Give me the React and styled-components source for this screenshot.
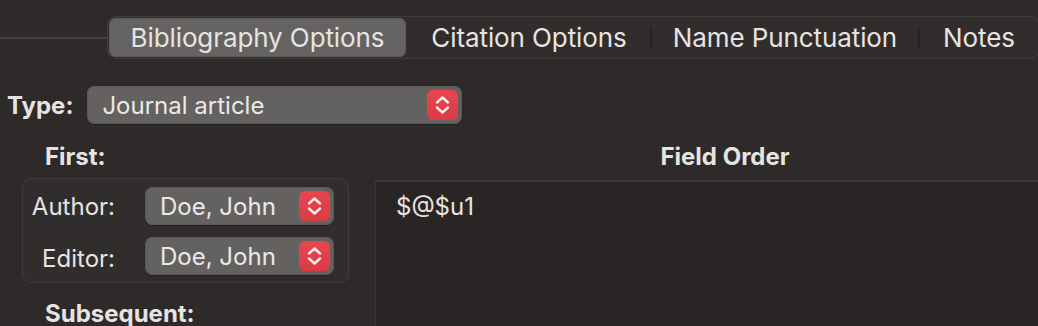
import React from 'react'
import styled, { createGlobalStyle } from 'styled-components'

const GlobalStyle = createGlobalStyle`
  html, body {
    margin: 0;
    padding: 0;
    background: #2d2a29;
  }
  body {
    font-family: Inter, "Noto Sans", "Liberation Sans", sans-serif;
    color: #e3e1df;
  }
`

const Window = styled.div`
  width: 1038px;
  height: 326px;
  overflow: hidden;
  background: #2d2a29;
`

const TabHeader = styled.div`
  display: flex;
  align-items: center;
  padding-top: 16px;
`

const TabRule = styled.div`
  flex: 0 0 107px;
  height: 2px;
  background: #444140;
`

const TabBar = styled.div`
  display: flex;
  align-items: center;
  height: 41px;
  padding: 0 1px;
  border: 1px solid #403d3c;
  border-radius: 9px;
  background: #302d2c;
`

const Tab = styled.div`
  width: ${(p) => p.$w}px;
  height: 39px;
  display: flex;
  align-items: center;
  justify-content: center;
  font-size: 26px;
  letter-spacing: -0.1px;
  color: #e6e4e2;
  border-radius: 7px;
  background: ${(p) => (p.$active ? '#656361' : 'transparent')};
  box-shadow: ${(p) => (p.$active ? 'inset 0 0 0 1px #5d5b59' : 'none')};
`

const TabDivider = styled.div`
  width: 2px;
  height: 22px;
  background: ${(p) => (p.$hidden ? 'transparent' : '#262322')};
`

const TypeRow = styled.div`
  display: flex;
  align-items: center;
  gap: 14px;
  padding-left: 7px;
  margin-top: 27px;
`

const BoldLabel = styled.div`
  font-size: 24px;
  font-weight: 700;
  color: #e6e4e2;
  line-height: 29px;
`

const Popup = styled.div`
  width: ${(p) => p.$w}px;
  height: 38px;
  box-sizing: border-box;
  display: flex;
  align-items: center;
  justify-content: space-between;
  padding: 0 4px 0 15px;
  border-radius: 8px;
  background: #646261;
  box-shadow: inset 0 0 0 1px #5a5856, 0 1px 1px rgba(0, 0, 0, 0.25);
  font-size: 24px;
  color: #ebe9e7;
`

const Stepper = styled.div`
  width: 31px;
  height: 30px;
  border-radius: 6px;
  background: linear-gradient(#e8454f, #dc3a45);
  display: flex;
  align-items: center;
  justify-content: center;
`

const Columns = styled.div`
  display: flex;
  align-items: flex-start;
  margin-top: 18px;
`

const LeftColumn = styled.div`
  flex: 0 0 325px;
  margin-left: 22px;
`

const SectionTitle = styled(BoldLabel)`
  padding-left: ${(p) => p.$indent || 0}px;
  text-align: ${(p) => p.$align || 'left'};
`

const GroupBox = styled.div`
  margin-top: 7px;
  box-sizing: border-box;
  height: 105px;
  padding: 8px 14px 0 0;
  border: 1px solid #403d3c;
  border-radius: 9px;
  background: #302d2c;
  display: flex;
  flex-direction: column;
  gap: 12px;
`

const FieldRow = styled.div`
  display: flex;
  align-items: center;
  justify-content: flex-end;
`

const FieldLabel = styled.div`
  width: 92px;
  text-align: right;
  margin-right: 30px;
  font-size: 24px;
  color: #e6e4e2;
  padding-top: ${(p) => p.$nudge || 0}px;
`

const Subsequent = styled(SectionTitle)`
  margin-top: 16px;
`

const RightColumn = styled.div`
  flex: 0 0 700px;
  margin-left: 26px;
`

const OrderArea = styled.div`
  margin-top: 9px;
  height: 160px;
  box-sizing: border-box;
  padding: 10px 20px;
  background: #282524;
  border-top: 2px solid #393736;
  border-left: 1px solid #393736;
  font-size: 24px;
  color: #e6e4e2;
`

const Chevrons = () => (
  <svg width="31" height="30" viewBox="0 0 31 30" fill="none">
    <path
      d="M10 12.5 L15.5 7.5 L21 12.5 M10 17.5 L15.5 22.5 L21 17.5"
      stroke="#fbeaea"
      strokeWidth="2.4"
      strokeLinecap="round"
      strokeLinejoin="round"
    />
  </svg>
)

const Select = ({ value, width }) => (
  <Popup $w={width}>
    <span>{value}</span>
    <Stepper>
      <Chevrons />
    </Stepper>
  </Popup>
)

const tabs = [
  { label: 'Bibliography Options', w: 297, active: true },
  { label: 'Citation Options', w: 242 },
  { label: 'Name Punctuation', w: 266 },
  { label: 'Notes', w: 118 },
]

export default function App() {
  return (
    <Window>
      <GlobalStyle />
      <TabHeader>
        <TabRule />
        <TabBar>
          {tabs.map((t, i) => (
            <React.Fragment key={t.label}>
              {i > 0 && <TabDivider $hidden={tabs[i - 1].active || t.active} />}
              <Tab $w={t.w} $active={t.active}>
                {t.label}
              </Tab>
            </React.Fragment>
          ))}
        </TabBar>
      </TabHeader>

      <TypeRow>
        <BoldLabel>Type:</BoldLabel>
        <Select value="Journal article" width={375} />
      </TypeRow>

      <Columns>
        <LeftColumn>
          <SectionTitle $indent={23}>First:</SectionTitle>
          <GroupBox>
            <FieldRow>
              <FieldLabel>Author:</FieldLabel>
              <Select value="Doe, John" width={189} />
            </FieldRow>
            <FieldRow>
              <FieldLabel $nudge={4}>Editor:</FieldLabel>
              <Select value="Doe, John" width={189} />
            </FieldRow>
          </GroupBox>
          <Subsequent $indent={23}>Subsequent:</Subsequent>
        </LeftColumn>
        <RightColumn>
          <SectionTitle $align="center">Field Order</SectionTitle>
          <OrderArea>$@$u1</OrderArea>
        </RightColumn>
      </Columns>
    </Window>
  )
}
